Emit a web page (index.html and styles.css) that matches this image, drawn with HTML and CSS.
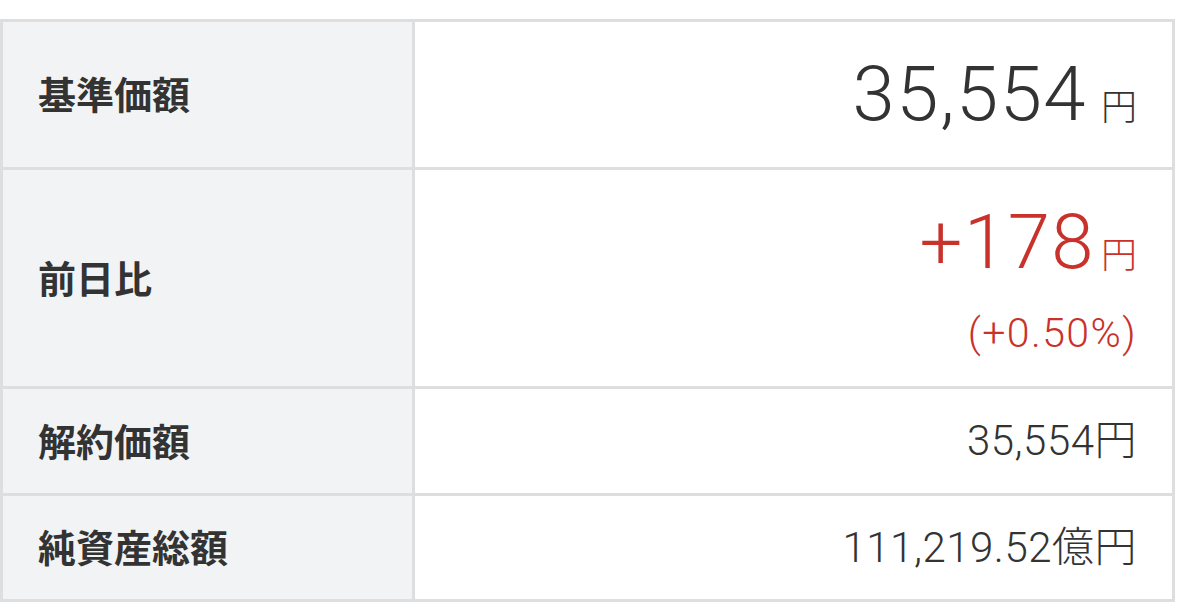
FILE: index.html
```html
<!DOCTYPE html>
<html lang="ja">
<head>
<meta charset="utf-8">
<link rel="stylesheet" href="styles.css">
</head>
<body>
<div class="table">
  <div class="label row-lg">基準価額</div>
  <div class="value row-lg"><div class="line"><span class="big">35,554</span><span class="unit">円</span></div></div>

  <div class="label row-xl">前日比</div>
  <div class="value row-xl red">
    <div class="line"><span class="big">+178</span><span class="unit tight">円</span></div>
    <div class="pct">(+0.50%)</div>
  </div>

  <div class="label row-sm">解約価額</div>
  <div class="value row-sm"><span class="mid">35,554円</span></div>

  <div class="label row-sm last">純資産総額</div>
  <div class="value row-sm last"><span class="mid">111,219.52億円</span></div>
</div>
</body>
</html>
```
FILE: styles.css
```css
html, body {
  margin: 0;
  padding: 0;
  background: #ffffff;
}
body {
  padding-top: 19px;
  font-family: Roboto, "Noto Sans CJK JP", sans-serif;
  font-weight: 300;
  color: #333333;
}
.table {
  width: 1175px;
  box-sizing: border-box;
  display: grid;
  grid-template-columns: 409px 1fr;
  gap: 3px;
  padding: 3px;
  background: #dedede;
}
.label {
  background: #f2f3f5;
  padding: 0 0 4px 35px;
  display: flex;
  align-items: center;
  font-family: "Noto Sans CJK JP", sans-serif;
  font-weight: 700;
  font-size: 38px;
  color: #333333;
}
.value {
  background: #ffffff;
  padding: 30px 35px 30px 0;
  display: flex;
  flex-direction: column;
  justify-content: center;
  align-items: flex-end;
}
.line {
  display: flex;
  align-items: baseline;
}
.row-lg { height: 145px; box-sizing: border-box; }
.row-xl { height: 216px; box-sizing: border-box; }
.row-sm { height: 104px; box-sizing: border-box; }
.row-sm.last { height: 103px; }
.big {
  font-size: 76px;
  line-height: 85px;
  letter-spacing: 1.5px;
}
.unit {
  font-family: "Noto Sans CJK JP", sans-serif;
  font-weight: 300;
  font-size: 36px;
  margin-left: 14px;
}
.unit.tight {
  margin-left: 6px;
}
.mid {
  font-size: 42px;
  line-height: 44px;
  letter-spacing: 0.5px;
}
.red { color: #c8322b; }
.pct {
  font-size: 41px;
  line-height: 45px;
  margin-top: 26px;
  letter-spacing: 1.4px;
}
```
